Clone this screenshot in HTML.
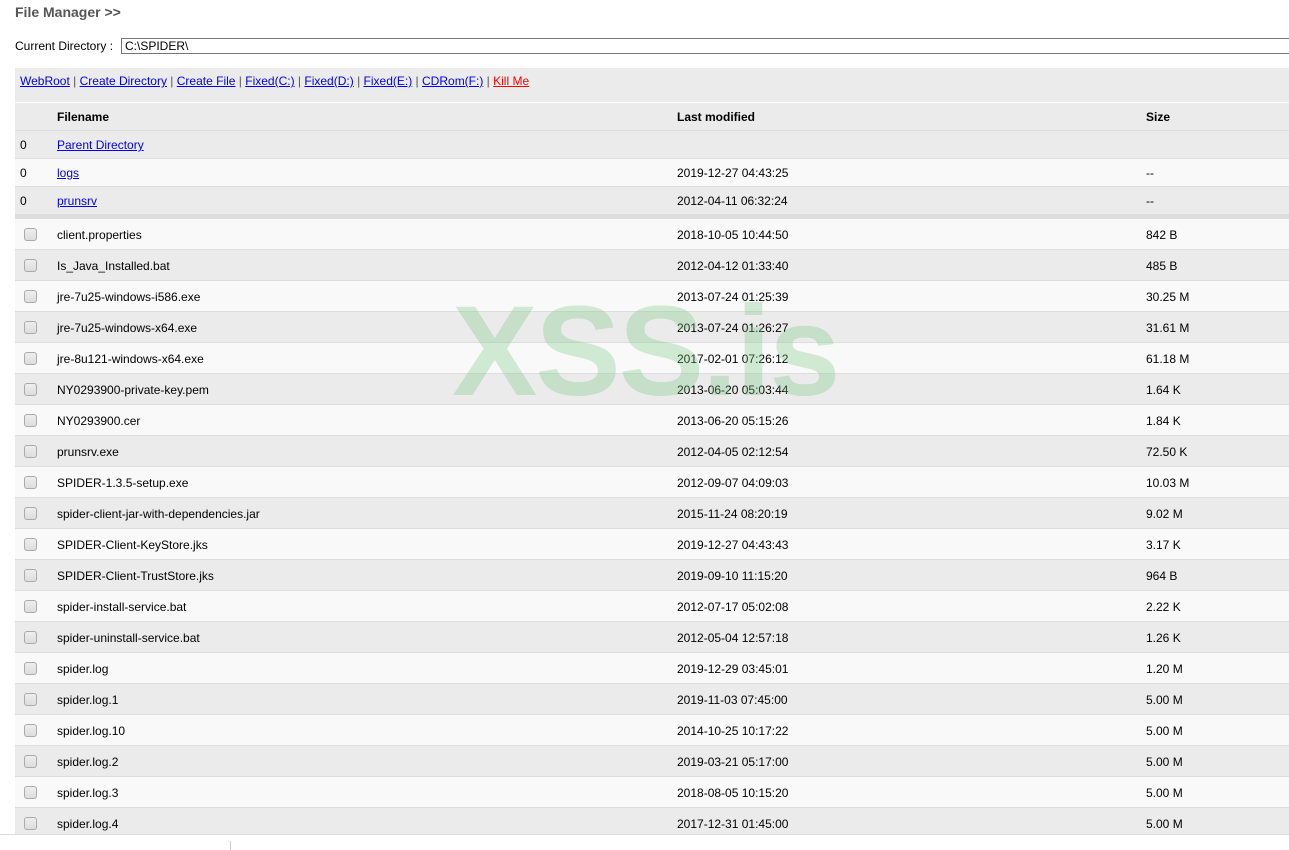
<!DOCTYPE html>
<html><head><meta charset="utf-8"><style>
*{margin:0;padding:0;box-sizing:border-box}
body{width:1289px;height:850px;overflow:hidden;background:#fff;font-family:"Liberation Sans",Arial,sans-serif;font-size:12px;color:#000;position:relative}
.t{position:absolute;left:15px;top:4px;font-weight:bold;font-size:14px;color:#555}
.cd{position:absolute;left:15px;top:39px;font-size:12px}
.inp{position:absolute;left:121px;top:38px;width:1180px;height:16px;border:1px solid #767676;padding-left:3px;font-size:12px;line-height:14px}
.bar{position:absolute;left:15px;top:68px;width:1274px;height:34px;background:#ebebeb;padding:6px 5px;font-size:12px;color:#555}
a{color:#00e;text-decoration:underline}
.row{position:absolute;left:15px;width:1274px;border-bottom:1px solid #ddd}
.row span{position:absolute}
.c0{left:5px}.c1{left:42px}.c2{left:662px}.c3{left:1131px}
.g{background:#ebebeb}.l{background:#f9f9f9}
.cb{position:absolute;left:9px;width:13px;height:13px;border:1px solid #aaa;border-radius:3px;background:linear-gradient(#eee,#ddd)}
.wm{position:absolute;left:452px;top:278px;font-size:128px;font-weight:bold;color:rgba(120,200,135,0.33);letter-spacing:-2px}
</style></head><body>
<div class="t">File Manager &gt;&gt;</div>
<div class="cd">Current Directory :</div>
<div class="inp">C:\SPIDER\</div>
<div class="bar"><a>WebRoot</a> | <a>Create Directory</a> | <a>Create File</a> | <a>Fixed(C:)</a> | <a>Fixed(D:)</a> | <a>Fixed(E:)</a> | <a>CDRom(F:)</a> | <a style="color:#f00">Kill Me</a></div>
<div class="row g" style="top:103px;height:28px;font-weight:bold"><span class="c1" style="top:7px">Filename</span><span class="c2" style="top:7px">Last modified</span><span class="c3" style="top:7px">Size</span></div>
<div class="row g" style="top:131px;height:28px"><span class="c0" style="top:7px">0</span><span class="c1" style="top:7px"><a>Parent Directory</a></span></div>
<div class="row l" style="top:159px;height:28px"><span class="c0" style="top:7px">0</span><span class="c1" style="top:7px"><a>logs</a></span><span class="c2" style="top:7px">2019-12-27 04:43:25</span><span class="c3" style="top:7px">--</span></div>
<div class="row g" style="top:187px;height:28px"><span class="c0" style="top:7px">0</span><span class="c1" style="top:7px"><a>prunsrv</a></span><span class="c2" style="top:7px">2012-04-11 06:32:24</span><span class="c3" style="top:7px">--</span></div>
<div style="position:absolute;left:15px;top:214px;width:1274px;height:5px;background:#ddd"></div>
<div id="files"></div>
<div class="wm">XSS.is</div>
<div style="position:absolute;left:0;top:834px;width:1289px;height:1px;background:#ddd"></div>
<div style="position:absolute;left:230px;top:841px;width:1px;height:9px;background:#ccc"></div>
<script>
var f=[["client.properties","2018-10-05 10:44:50","842 B"],["Is_Java_Installed.bat","2012-04-12 01:33:40","485 B"],["jre-7u25-windows-i586.exe","2013-07-24 01:25:39","30.25 M"],["jre-7u25-windows-x64.exe","2013-07-24 01:26:27","31.61 M"],["jre-8u121-windows-x64.exe","2017-02-01 07:26:12","61.18 M"],["NY0293900-private-key.pem","2013-06-20 05:03:44","1.64 K"],["NY0293900.cer","2013-06-20 05:15:26","1.84 K"],["prunsrv.exe","2012-04-05 02:12:54","72.50 K"],["SPIDER-1.3.5-setup.exe","2012-09-07 04:09:03","10.03 M"],["spider-client-jar-with-dependencies.jar","2015-11-24 08:20:19","9.02 M"],["SPIDER-Client-KeyStore.jks","2019-12-27 04:43:43","3.17 K"],["SPIDER-Client-TrustStore.jks","2019-09-10 11:15:20","964 B"],["spider-install-service.bat","2012-07-17 05:02:08","2.22 K"],["spider-uninstall-service.bat","2012-05-04 12:57:18","1.26 K"],["spider.log","2019-12-29 03:45:01","1.20 M"],["spider.log.1","2019-11-03 07:45:00","5.00 M"],["spider.log.10","2014-10-25 10:17:22","5.00 M"],["spider.log.2","2019-03-21 05:17:00","5.00 M"],["spider.log.3","2018-08-05 10:15:20","5.00 M"],["spider.log.4","2017-12-31 01:45:00","5.00 M"]];
var h="";f.forEach(function(r,i){var top=219+i*31;h+='<div class="row '+(i%2?'g':'l')+'" style="top:'+top+'px;height:'+(i==19?26:31)+'px;'+(i==19?'border:0;overflow:hidden':'')+'"><div class="cb" style="top:9px"></div><span class="c1" style="top:9px">'+r[0]+'</span><span class="c2" style="top:9px">'+r[1]+'</span><span class="c3" style="top:9px">'+r[2]+'</span></div>';});
document.getElementById("files").innerHTML=h;
</script>
</body></html>
